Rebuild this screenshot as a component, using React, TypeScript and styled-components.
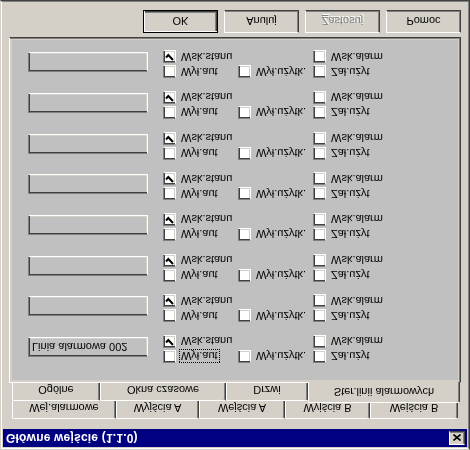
import React from "react";
import styled, {createGlobalStyle} from "styled-components";

const GlobalStyle = createGlobalStyle`
  html, body {
    margin: 0;
    padding: 0;
    background: #d4d0c8;
    overflow: hidden;
  }
  body {
    font-family: "Liberation Sans", Arial, sans-serif;
    font-size: 11px;
  }
`;

const FACE = "#d4d0c8";
const SHADOW = "#808080";
const DARK = "#404040";
const SHEET = "#c0c0c0";

// the capture is upside down, so the dialog is drawn normally and flipped
const Screen = styled.div`
  width: 470px;
  height: 450px;
  box-sizing: border-box;
  transform: scaleY(-1);
  background: ${FACE};
  border: 1px solid;
  border-color: ${FACE} ${DARK} ${DARK} ${FACE};
`;

const Frame = styled.div`
  height: 100%;
  box-sizing: border-box;
  border: 1px solid;
  border-color: #fff ${SHADOW} ${SHADOW} #fff;
  padding: 1px;
  display: flex;
  flex-direction: column;
`;

const TitleBar = styled.div`
  height: 18px;
  flex: none;
  background: #000080;
  display: flex;
  align-items: center;
  justify-content: space-between;
  padding: 0 2px 0 3px;
`;

const Title = styled.span`
  color: #fff;
  font-weight: bold;
  font-size: 12px;
  letter-spacing: 0.2px;
`;

const CloseButton = styled.div`
  width: 16px;
  height: 14px;
  box-sizing: border-box;
  background: ${FACE};
  border: 1px solid;
  border-color: #fff ${DARK} ${DARK} #fff;
  box-shadow: inset -1px -1px ${SHADOW};
  display: flex;
  align-items: center;
  justify-content: center;
`;

const Body = styled.div`
  padding: 10px 6px 0 6px;
  display: flex;
  flex-direction: column;
`;

const TabRow = styled.div`
  display: flex;
  padding-left: 3px;
  height: 18px;
  align-items: flex-end;
`;

const Tab = styled.div<{$w: number; $active?: boolean}>`
  width: ${p => p.$w}px;
  height: ${p => (p.$active ? 21 : 18)}px;
  margin-top: ${p => (p.$active ? -2 : 0)}px;
  margin-bottom: ${p => (p.$active ? -1 : 0)}px;
  position: relative;
  z-index: ${p => (p.$active ? 2 : 0)};
  box-sizing: border-box;
  background: ${FACE};
  border-top: 1px solid #fff;
  border-left: 1px solid #fff;
  border-right: 1px solid ${DARK};
  box-shadow: inset -1px 0 ${SHADOW};
  border-radius: 2px 2px 0 0;
  display: flex;
  align-items: center;
  justify-content: center;
  padding-top: ${p => (p.$active ? 0 : 2)}px;
  white-space: nowrap;
`;

const Page = styled.div`
  height: 346px;
  box-sizing: border-box;
  border: 1px solid;
  border-color: #fff ${DARK} ${DARK} #fff;
  box-shadow: inset -1px -1px ${SHADOW};
  padding: 2px;
  position: relative;
  z-index: 1;
`;

const Sheet = styled.div`
  height: 100%;
  box-sizing: border-box;
  background: ${SHEET};
  padding: 17px 0 0 16px;
  display: grid;
  grid-auto-rows: 40.7px;
  align-content: start;
`;

const Group = styled.div`
  display: flex;
  align-items: flex-start;
`;

const Edit = styled.div`
  width: 120px;
  height: 20px;
  margin-top: 6px;
  box-sizing: border-box;
  border: 1px solid;
  border-color: ${SHADOW} #fff #fff ${SHADOW};
  box-shadow: inset 1px 1px ${DARK}, inset -1px -1px ${FACE};
  background: ${SHEET};
  padding: 0 3px;
  line-height: 18px;
  white-space: nowrap;
  color: #000;
`;

const Checks = styled.div`
  margin-left: 15px;
  display: grid;
  grid-template-columns: 75px 75px auto;
  grid-auto-rows: 15px;
`;

const CheckItem = styled.div`
  display: flex;
  align-items: center;
  height: 13px;
  gap: 5px;
`;

const Box = styled.span`
  width: 13px;
  height: 13px;
  flex: none;
  box-sizing: border-box;
  border: 1px solid;
  border-color: ${SHADOW} #fff #fff ${SHADOW};
  box-shadow: inset 1px 1px ${DARK}, inset -1px -1px ${FACE};
  background: #fff;
  display: flex;
  align-items: center;
  justify-content: center;
`;

const Label = styled.span<{$focus?: boolean}>`
  white-space: nowrap;
  line-height: 12px;
  padding: 0 1px;
  margin-left: -1px;
  outline: ${p => (p.$focus ? "1px dotted #000" : "none")};
  outline-offset: 0;
`;

const Buttons = styled.div`
  margin-top: 4px;
  display: flex;
  justify-content: flex-end;
  gap: 6px;
`;

const Button = styled.div<{$default?: boolean; $disabled?: boolean}>`
  width: 75px;
  height: 23px;
  box-sizing: border-box;
  background: ${FACE};
  border: 1px solid;
  border-color: ${p => (p.$default ? "#000" : `#fff ${DARK} ${DARK} #fff`)};
  box-shadow: ${p =>
    p.$default
      ? `inset 1px 1px #fff, inset -1px -1px ${DARK}, inset -2px -2px ${SHADOW}`
      : `inset -1px -1px ${SHADOW}`};
  display: flex;
  align-items: center;
  justify-content: center;
  color: ${p => (p.$disabled ? SHADOW : "#000")};
  text-shadow: ${p => (p.$disabled ? "1px 1px #fff" : "none")};
`;

const backTabs = [
  {label: "Wej.alarmowe", w: 104},
  {label: "Wyjścia A", w: 83},
  {label: "Wejścia A", w: 86},
  {label: "Wyjścia B", w: 85},
  {label: "Wejścia B", w: 88},
];

const frontTabs = [
  {label: "Ogólne", w: 88},
  {label: "Okna czasowe", w: 126},
  {label: "Drzwi", w: 82},
  {label: "Ster.linii alarmowych", w: 152, active: true},
];

const CheckMark = () => (
  <svg width="9" height="9" viewBox="0 0 9 9">
    <polyline points="1,3.5 3.3,6 8,1" fill="none" stroke="#000" strokeWidth="2" />
  </svg>
);

const Check = ({label, checked, focus}: {label: string; checked?: boolean; focus?: boolean}) => (
  <CheckItem>
    <Box>{checked && <CheckMark />}</Box>
    <Label $focus={focus}>{label}</Label>
  </CheckItem>
);

const LineGroup = ({name, focus}: {name: string; focus?: boolean}) => (
  <Group>
    <Edit>{name}</Edit>
    <Checks>
      <Check label="Wył.aut" focus={focus} />
      <Check label="Wył.użytk." />
      <Check label="Zał.użyt" />
      <Check label="Wsk.stanu" checked />
      <span />
      <Check label="Wsk.alarm" />
    </Checks>
  </Group>
);

const App = () => {
  const lines = ["Linia alarmowa 002", "", "", "", "", "", "", ""];

  return (
    <Screen>
      <GlobalStyle />
      <Frame>
        <TitleBar>
          <Title>Główne wejście (1.1.0)</Title>
          <CloseButton>
            <svg width="8" height="7" viewBox="0 0 8 7">
              <path d="M0.5 0.5 L7.5 6.5 M7.5 0.5 L0.5 6.5" stroke="#000" strokeWidth="1.6" />
            </svg>
          </CloseButton>
        </TitleBar>
        <Body>
          <TabRow>
            {backTabs.map(t => (
              <Tab key={t.label} $w={t.w}>{t.label}</Tab>
            ))}
          </TabRow>
          <TabRow>
            {frontTabs.map(t => (
              <Tab key={t.label} $w={t.w} $active={t.active}>{t.label}</Tab>
            ))}
          </TabRow>
          <Page>
            <Sheet>
              {lines.map((name, i) => (
                <LineGroup key={i} name={name} focus={i === 0} />
              ))}
            </Sheet>
          </Page>
          <Buttons>
            <Button $default>OK</Button>
            <Button>Anuluj</Button>
            <Button $disabled><u>Z</u>astosuj</Button>
            <Button>Pomoc</Button>
          </Buttons>
        </Body>
      </Frame>
    </Screen>
  );
};

export default App;
